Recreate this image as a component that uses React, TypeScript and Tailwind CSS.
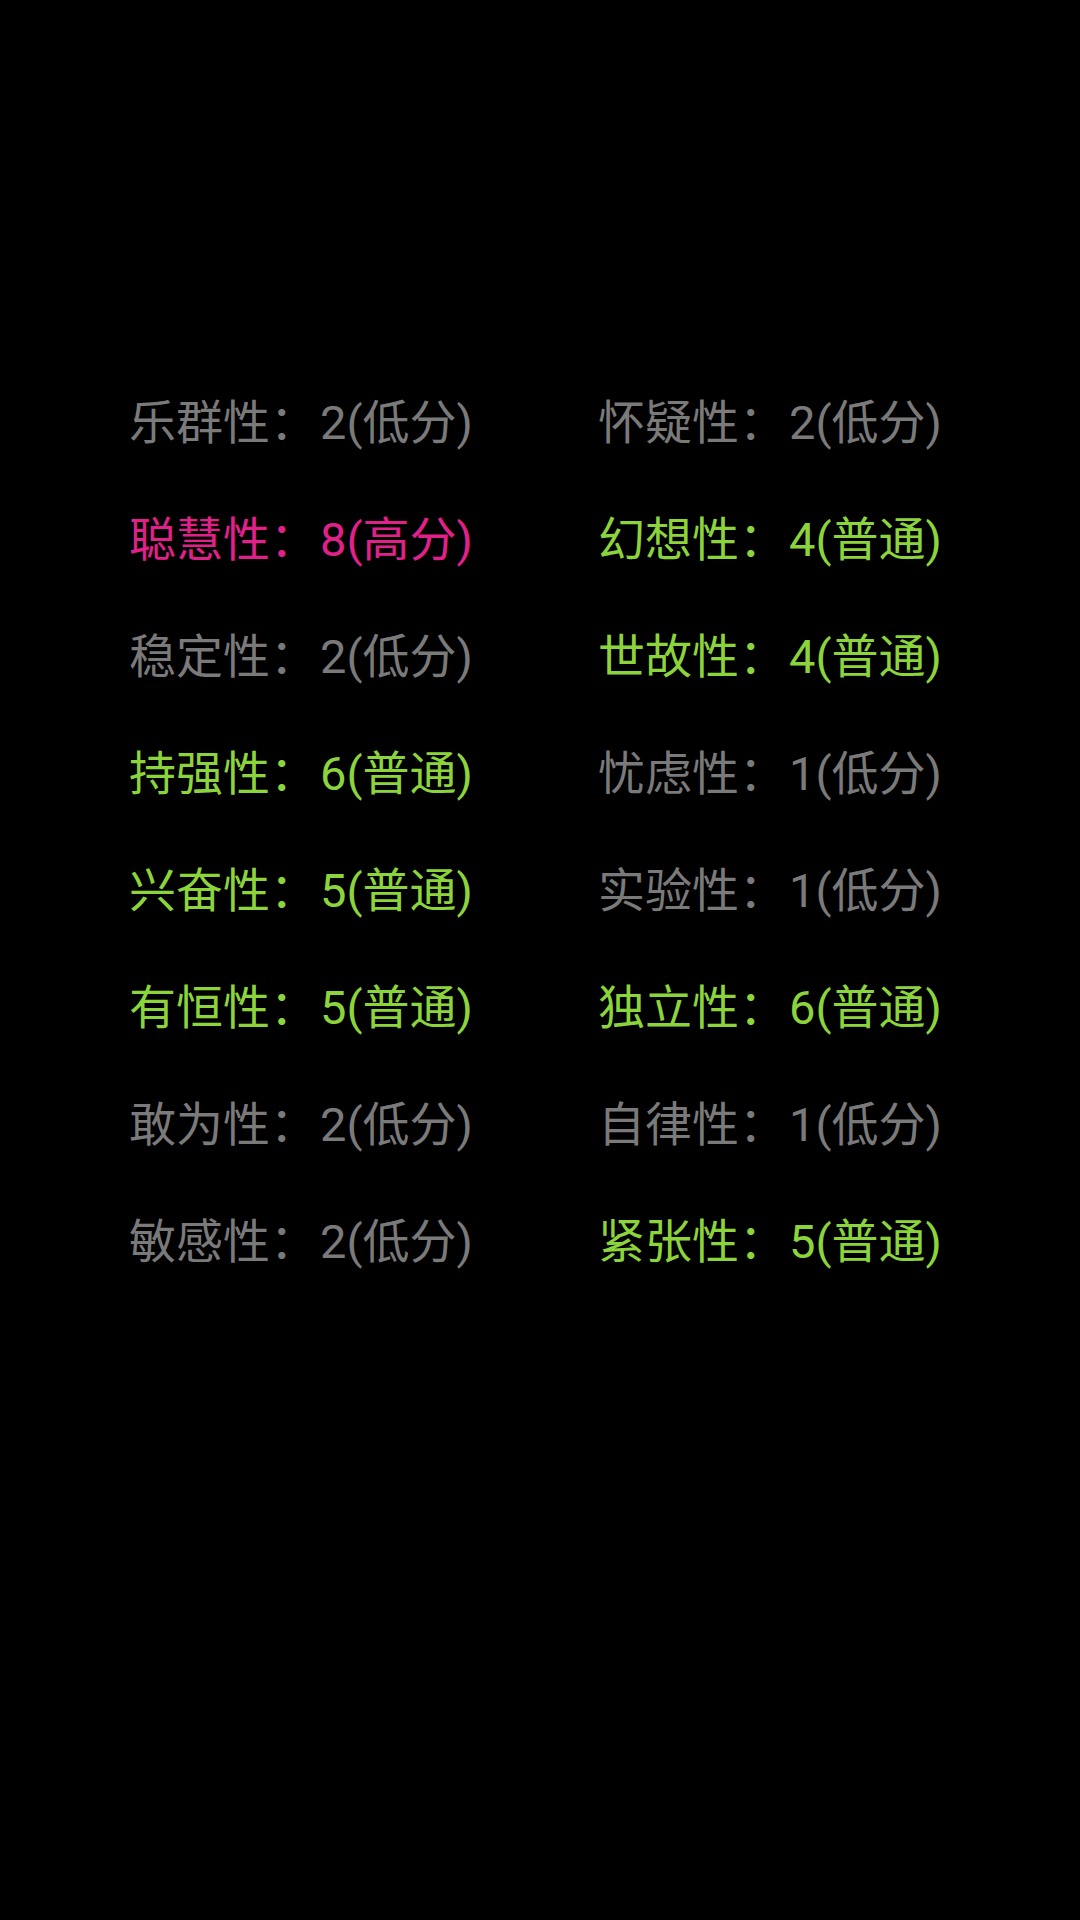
import React from 'react';

type Item = { name: string; score: number; level: string; tone: 'low' | 'mid' | 'high' };

const rows: [Item, Item][] = [
  [
    { name: '乐群性', score: 2, level: '低分', tone: 'low' },
    { name: '怀疑性', score: 2, level: '低分', tone: 'low' },
  ],
  [
    { name: '聪慧性', score: 8, level: '高分', tone: 'high' },
    { name: '幻想性', score: 4, level: '普通', tone: 'mid' },
  ],
  [
    { name: '稳定性', score: 2, level: '低分', tone: 'low' },
    { name: '世故性', score: 4, level: '普通', tone: 'mid' },
  ],
  [
    { name: '持强性', score: 6, level: '普通', tone: 'mid' },
    { name: '忧虑性', score: 1, level: '低分', tone: 'low' },
  ],
  [
    { name: '兴奋性', score: 5, level: '普通', tone: 'mid' },
    { name: '实验性', score: 1, level: '低分', tone: 'low' },
  ],
  [
    { name: '有恒性', score: 5, level: '普通', tone: 'mid' },
    { name: '独立性', score: 6, level: '普通', tone: 'mid' },
  ],
  [
    { name: '敢为性', score: 2, level: '低分', tone: 'low' },
    { name: '自律性', score: 1, level: '低分', tone: 'low' },
  ],
  [
    { name: '敏感性', score: 2, level: '低分', tone: 'low' },
    { name: '紧张性', score: 5, level: '普通', tone: 'mid' },
  ],
];

const toneClass = {
  low: 'text-[#7a7a7a]',
  mid: 'text-[#8cd43c]',
  high: 'text-[#e0218a]',
};

const Cell: React.FC<{ item: Item }> = ({ item }) => (
  <div className={`h-[117px] flex items-center whitespace-nowrap ${toneClass[item.tone]}`}>
    {item.name}
    <span className="pr-[3px]">：</span>
    {item.score}({item.level})
  </div>
);

const App: React.FC = () => {
  return (
    <div
      className="w-[1080px] h-[1920px] bg-black pt-[364px] pl-[129px] text-[47px] leading-none"
      style={{ fontFamily: 'Roboto, "Noto Sans CJK SC", sans-serif' }}
    >
      <div className="grid grid-cols-[469px_auto]">
        {rows.map((pair, i) => (
          <React.Fragment key={i}>
            <Cell item={pair[0]} />
            <Cell item={pair[1]} />
          </React.Fragment>
        ))}
      </div>
    </div>
  );
};

export default App;
